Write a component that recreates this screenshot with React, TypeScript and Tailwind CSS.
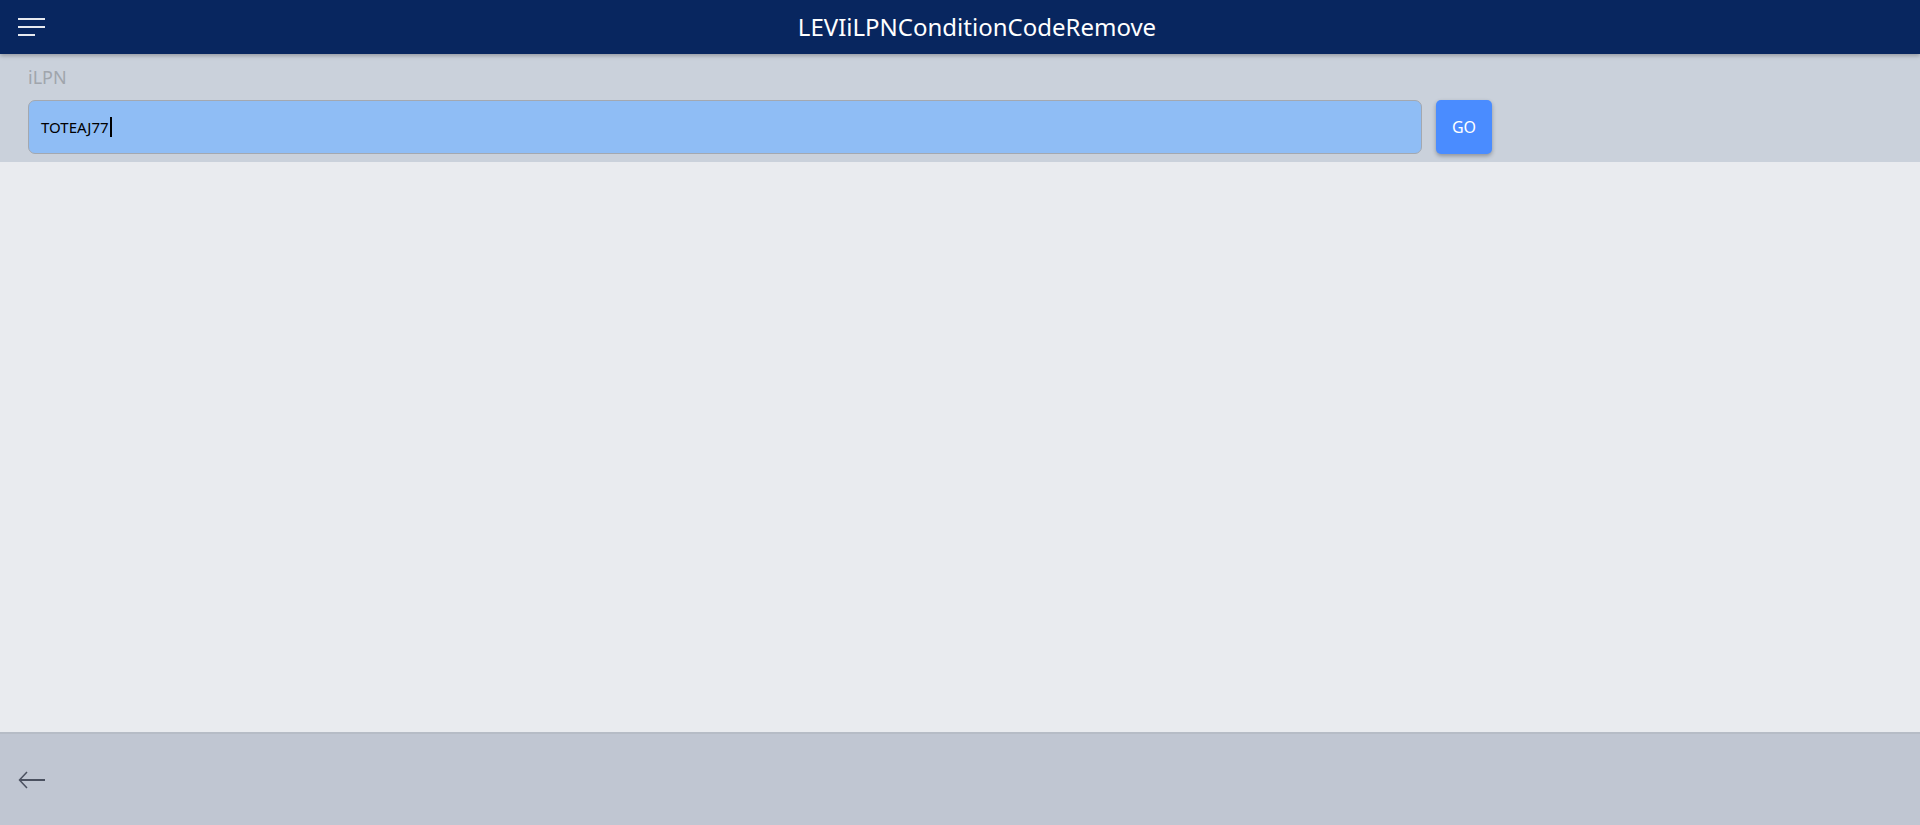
import React from "react";

export default function App() {
  return (
    <div className="w-[1920px] h-[825px] flex flex-col bg-[#e9ebef] overflow-hidden" style={{ fontFamily: '"Noto Sans", "Open Sans", sans-serif' }}>
      <header className="h-[54px] shrink-0 bg-[#08265f] flex items-center relative z-10 shadow-[0_2px_4px_rgba(0,0,0,0.25)]">
        <div className="w-[64px] pl-[18px] flex flex-col gap-[6px]">
          <div className="w-[27px] h-[2px] bg-white/90"></div>
          <div className="w-[27px] h-[2px] bg-white/90"></div>
          <div className="w-[17px] h-[2px] bg-white/90"></div>
        </div>
        <div className="flex-1 flex justify-center pr-[30px] text-white text-[24px] leading-none">
          LEVIiLPNConditionCodeRemove
        </div>
      </header>
      <section className="bg-[#cad1db] h-[108px] shrink-0 pl-[28px] pr-[428px]">
        <div className="pt-[11px] h-[46px] text-[18px] leading-[24px] text-[#a0a5ac]">iLPN</div>
        <div className="flex gap-[14px] items-start">
          <div className="flex-1 h-[54px] rounded-[7px] border border-[#a3a8b0] bg-[#8fbdf5] flex items-center pl-[12px] text-[15px] text-black">
            <span>TOTEAJ77</span>
            <span className="w-[2px] h-[20px] bg-black ml-[1px]"></span>
          </div>
          <button className="w-[56px] h-[54px] rounded-[5px] bg-[#4a8cff] text-white text-[16px] shadow-[0_2px_4px_rgba(0,0,0,0.3)]">GO</button>
        </div>
      </section>
      <main className="flex-1"></main>
      <footer className="h-[93px] shrink-0 bg-[#c0c6d2] border-t-2 border-[#b6bcc6] flex items-center pl-[18px]">
        <svg width="28" height="18" viewBox="0 0 28 18" fill="none" stroke="#4b5160" strokeWidth="1.5">
          <path d="M27 9H2" strokeWidth="2" />
          <path d="M9 1L1.5 9L9 17" />
        </svg>
      </footer>
    </div>
  );
}
